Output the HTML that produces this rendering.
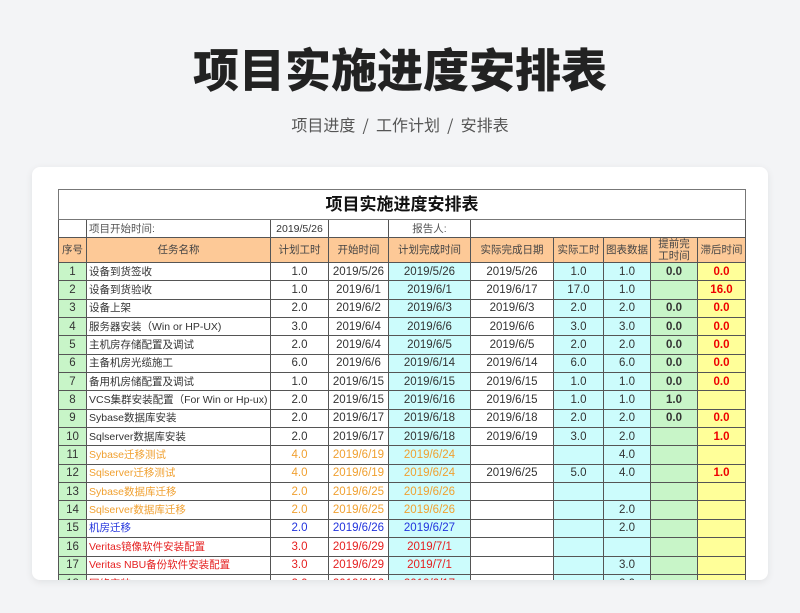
<!DOCTYPE html>
<html><head><meta charset="utf-8"><style>
body{margin:0;width:800px;height:613px;background:#f3f4f6;font-family:"Liberation Sans","Noto Sans CJK SC",sans-serif;overflow:hidden;position:relative}
h1{position:absolute;top:38px;left:0;width:800px;text-align:center;margin:0;font-size:46px;font-weight:900;color:#222;line-height:60px;font-family:"Noto Sans CJK SC",sans-serif}
.sub{position:absolute;top:112px;width:800px;text-align:center;font-size:16px;color:#555;font-family:"Noto Sans CJK SC",sans-serif}
.card{position:absolute;left:32px;top:167px;width:736px;height:413px;background:#fff;border-radius:8px;box-shadow:0 2px 8px rgba(0,0,0,.08);overflow:hidden}
table{position:absolute;left:26px;top:22px;border-collapse:collapse;table-layout:fixed;font-size:11.5px;color:#333;font-family:"Liberation Sans","Noto Sans CJK SC",sans-serif}
td{border:1px solid #555;height:17.35px;padding:0 2px;text-align:center;white-space:nowrap;overflow:hidden;line-height:12px}
td.l{text-align:left;font-size:10.5px}
.t td{height:29px;font-size:17px;font-weight:bold;color:#111;border-color:#777}
.i td{height:17px;color:#555;font-size:10.5px}
.h td{background:#fdc997;height:24px;color:#444;font-size:10.5px}
td.g{background:#c8f5c8}td.c{background:#ccfcfc}td.y{background:#ffff99}
.b{font-weight:bold}
.o td{color:#f0a030}.o td.k{color:#333}
.bl td{color:#2233dd}.bl td.k{color:#333}
.rd td{color:#e52020}.rd td.k{color:#333}
table td.r{color:#e00;font-weight:bold}
</style></head><body>
<h1>项目实施进度安排表</h1>
<div class="sub">项目进度 &nbsp;/&nbsp; 工作计划 &nbsp;/&nbsp; 安排表</div>
<div class="card">
<table>
<colgroup><col style="width:28px"><col style="width:184px"><col style="width:58px"><col style="width:60px"><col style="width:82px"><col style="width:83px"><col style="width:50px"><col style="width:45px"><col style="width:47px"><col style="width:48px"></colgroup>
<tr class="t"><td colspan="10">项目实施进度安排表</td></tr>
<tr class="i"><td></td><td class="l">项目开始时间:</td><td style="color:#333">2019/5/26</td><td></td><td>报告人:</td><td colspan="5"></td></tr>
<tr class="h"><td>序号</td><td>任务名称</td><td>计划工时</td><td>开始时间</td><td>计划完成时间</td><td>实际完成日期</td><td>实际工时</td><td>图表数据</td><td style="line-height:12px;white-space:normal;padding:0 4px">提前完工时间</td><td>滞后时间</td></tr>
<tr><td class="g k">1</td><td class="l">设备到货签收</td><td>1.0</td><td>2019/5/26</td><td class="c">2019/5/26</td><td>2019/5/26</td><td class="c">1.0</td><td class="c">1.0</td><td class="g b">0.0</td><td class="y r">0.0</td></tr>
<tr><td class="g k">2</td><td class="l">设备到货验收</td><td>1.0</td><td>2019/6/1</td><td class="c">2019/6/1</td><td>2019/6/17</td><td class="c">17.0</td><td class="c">1.0</td><td class="g"></td><td class="y r">16.0</td></tr>
<tr><td class="g k">3</td><td class="l">设备上架</td><td>2.0</td><td>2019/6/2</td><td class="c">2019/6/3</td><td>2019/6/3</td><td class="c">2.0</td><td class="c">2.0</td><td class="g b">0.0</td><td class="y r">0.0</td></tr>
<tr><td class="g k">4</td><td class="l">服务器安装（Win or HP-UX)</td><td>3.0</td><td>2019/6/4</td><td class="c">2019/6/6</td><td>2019/6/6</td><td class="c">3.0</td><td class="c">3.0</td><td class="g b">0.0</td><td class="y r">0.0</td></tr>
<tr><td class="g k">5</td><td class="l">主机房存储配置及调试</td><td>2.0</td><td>2019/6/4</td><td class="c">2019/6/5</td><td>2019/6/5</td><td class="c">2.0</td><td class="c">2.0</td><td class="g b">0.0</td><td class="y r">0.0</td></tr>
<tr><td class="g k">6</td><td class="l">主备机房光缆施工</td><td>6.0</td><td>2019/6/6</td><td class="c">2019/6/14</td><td>2019/6/14</td><td class="c">6.0</td><td class="c">6.0</td><td class="g b">0.0</td><td class="y r">0.0</td></tr>
<tr><td class="g k">7</td><td class="l">备用机房储配置及调试</td><td>1.0</td><td>2019/6/15</td><td class="c">2019/6/15</td><td>2019/6/15</td><td class="c">1.0</td><td class="c">1.0</td><td class="g b">0.0</td><td class="y r">0.0</td></tr>
<tr><td class="g k">8</td><td class="l">VCS集群安装配置（For Win or Hp-ux)</td><td>2.0</td><td>2019/6/15</td><td class="c">2019/6/16</td><td>2019/6/15</td><td class="c">1.0</td><td class="c">1.0</td><td class="g b">1.0</td><td class="y"></td></tr>
<tr><td class="g k">9</td><td class="l">Sybase数据库安装</td><td>2.0</td><td>2019/6/17</td><td class="c">2019/6/18</td><td>2019/6/18</td><td class="c">2.0</td><td class="c">2.0</td><td class="g b">0.0</td><td class="y r">0.0</td></tr>
<tr><td class="g k">10</td><td class="l">Sqlserver数据库安装</td><td>2.0</td><td>2019/6/17</td><td class="c">2019/6/18</td><td>2019/6/19</td><td class="c">3.0</td><td class="c">2.0</td><td class="g"></td><td class="y r">1.0</td></tr>
<tr class="o"><td class="g k">11</td><td class="l">Sybase迁移测试</td><td>4.0</td><td>2019/6/19</td><td class="c">2019/6/24</td><td></td><td class="c"></td><td class="c k">4.0</td><td class="g"></td><td class="y"></td></tr>
<tr class="o"><td class="g k">12</td><td class="l">Sqlserver迁移测试</td><td>4.0</td><td>2019/6/19</td><td class="c">2019/6/24</td><td class="k">2019/6/25</td><td class="c k">5.0</td><td class="c k">4.0</td><td class="g"></td><td class="y r">1.0</td></tr>
<tr class="o"><td class="g k">13</td><td class="l">Sybase数据库迁移</td><td>2.0</td><td>2019/6/25</td><td class="c">2019/6/26</td><td></td><td class="c"></td><td class="c"></td><td class="g"></td><td class="y"></td></tr>
<tr class="o"><td class="g k">14</td><td class="l">Sqlserver数据库迁移</td><td>2.0</td><td>2019/6/25</td><td class="c">2019/6/26</td><td></td><td class="c"></td><td class="c k">2.0</td><td class="g"></td><td class="y"></td></tr>
<tr class="bl"><td class="g k">15</td><td class="l">机房迁移</td><td>2.0</td><td>2019/6/26</td><td class="c">2019/6/27</td><td></td><td class="c"></td><td class="c k">2.0</td><td class="g"></td><td class="y"></td></tr>
<tr class="rd"><td class="g k">16</td><td class="l">Veritas镜像软件安装配置</td><td>3.0</td><td>2019/6/29</td><td class="c">2019/7/1</td><td></td><td class="c"></td><td class="c"></td><td class="g"></td><td class="y"></td></tr>
<tr class="rd"><td class="g k">17</td><td class="l">Veritas NBU备份软件安装配置</td><td>3.0</td><td>2019/6/29</td><td class="c">2019/7/1</td><td></td><td class="c"></td><td class="c k">3.0</td><td class="g"></td><td class="y"></td></tr>
<tr class="rd"><td class="g k">18</td><td class="l">网络安装</td><td>2.0</td><td>2019/6/16</td><td class="c">2019/6/17</td><td></td><td class="c"></td><td class="c k">2.0</td><td class="g"></td><td class="y"></td></tr>
</table>
</div>
</body></html>
